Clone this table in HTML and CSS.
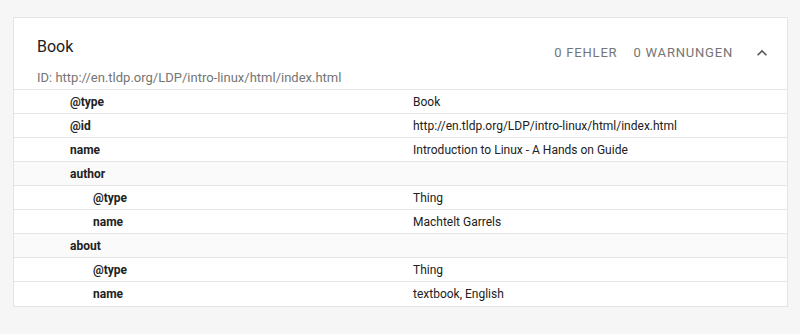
FILE: index.html
```html
<!DOCTYPE html>
<html lang="de">
<head>
    <meta charset="UTF-8">
    <meta name="viewport" content="width=device-width, initial-scale=1.0">
    <title>Book</title>
    <link rel="stylesheet" href="styles.css">
</head>
<body>
    <!-- Result card -->
    <div class="card">
        <div class="card-header">
            <div class="title-row">
                <h2 class="title">Book</h2>
                <div class="status">
                    <span>0 Fehler</span>
                    <span>0 Warnungen</span>
                    <svg class="chevron" viewBox="0 0 24 24" width="20" height="20"><path d="M12 8l-6 6 1.41 1.41L12 10.83l4.59 4.58L18 14z"/></svg>
                </div>
            </div>
            <div class="item-id">ID: http://en.tldp.org/LDP/intro-linux/html/index.html</div>
        </div>

        <!-- Properties -->
        <div class="props">
            <div class="row"><div class="key">@type</div><div class="val">Book</div></div>
            <div class="row"><div class="key">@id</div><div class="val">http://en.tldp.org/LDP/intro-linux/html/index.html</div></div>
            <div class="row"><div class="key">name</div><div class="val">Introduction to Linux - A Hands on Guide</div></div>
            <div class="row parent"><div class="key">author</div><div class="val"></div></div>
            <div class="row"><div class="key nested">@type</div><div class="val">Thing</div></div>
            <div class="row"><div class="key nested">name</div><div class="val">Machtelt Garrels</div></div>
            <div class="row parent"><div class="key">about</div><div class="val"></div></div>
            <div class="row"><div class="key nested">@type</div><div class="val">Thing</div></div>
            <div class="row"><div class="key nested">name</div><div class="val">textbook, English</div></div>
        </div>
    </div>
</body>
</html>
```

FILE: styles.css
```css
/* Page */
body {
    margin: 17px 12px 0 13px;
    background: #f6f6f6;
    font-family: Roboto, "Liberation Sans", sans-serif;
    color: #212121;
}

/* Card */
.card {
    background: #ffffff;
    border: 1px solid #e4e4e4;
    box-shadow: 0 2px 2px rgba(0, 0, 0, 0.14);
}

.card-header {
    padding: 17px 15px 1px 23px;
    border-bottom: 1px solid #e6e6e6;
}

.title-row {
    display: flex;
    justify-content: space-between;
    align-items: flex-start;
}

.title {
    margin: 0;
    font-size: 16px;
    font-weight: normal;
    line-height: 24px;
    color: #212121;
}

.status {
    display: flex;
    align-items: center;
    gap: 16px;
    margin-top: 8px;
    font-size: 13px;
    line-height: 20px;
    text-transform: uppercase;
    letter-spacing: 0.8px;
    color: #757575;
}

.chevron {
    fill: #555555;
    margin-left: 3px;
}

.item-id {
    margin-top: 5px;
    font-size: 13px;
    line-height: 20px;
    color: #757575;
}

/* Property rows */
.row {
    display: grid;
    grid-template-columns: 399px 1fr;
    height: 23px;
    border-bottom: 1px solid #e6e6e6;
    font-size: 12px;
    line-height: 25px;
}

.row:last-child {
    height: 24px;
    border-bottom: none;
}

.row.parent {
    background: #fafafa;
}

.key {
    padding-left: 56px;
    font-weight: bold;
}

.key.nested {
    padding-left: 79px;
}

.val {
    color: #212121;
}
```
